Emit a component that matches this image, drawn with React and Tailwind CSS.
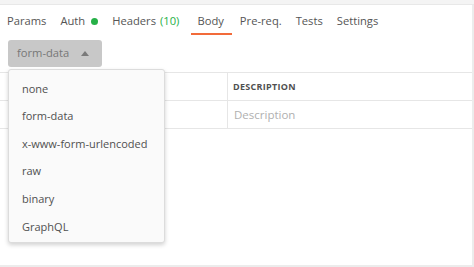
import React from "react";

const tabs = [
	{ label: "Params" },
	{ label: "Auth", dot: true },
	{ label: "Headers", count: "(10)" },
	{ label: "Body", active: true },
	{ label: "Pre-req." },
	{ label: "Tests" },
	{ label: "Settings" },
];

const options = ["none", "form-data", "x-www-form-urlencoded", "raw", "binary", "GraphQL"];

export default function App() {
	return (
		<div
			className="relative w-[474px] h-[267px] bg-white overflow-hidden text-[#505050]"
			style={{ fontFamily: '"Open Sans", sans-serif' }}
		>
			<div className="h-[5px] bg-[#f4f4f4] border-b border-[#e8e8e8]" />
			<div className="absolute right-0 top-[5px] bottom-0 w-[2px] bg-[#ececec]" />
			<div className="absolute left-0 right-0 bottom-0 h-[2px] bg-[#ececec]" />

			<div className="flex items-start h-[30px] pt-[1px] text-[11.2px] leading-[30px]">
				{tabs.map((t) => (
					<div
						key={t.label}
						className={`relative flex items-center ${t.active ? "ml-[5px] pl-[6px] pr-[8px] mr-[1px]" : "px-[7px]"}`}
					>
						<span className="text-[#555]">{t.label}</span>
						{t.dot && <span className="ml-[6px] w-[7px] h-[7px] rounded-full bg-[#26b047]" />}
						{t.count && <span className="ml-[4px] text-[#26b047]">{t.count}</span>}
						{t.active && (
							<span className="absolute left-0 right-0 top-[27px] h-[2px] bg-[#f26b3a]" />
						)}
					</div>
				))}
			</div>

			<div className="pl-[8px] pt-[5px]">
				<div className="flex items-center justify-between w-[94px] h-[27px] rounded-[3px] bg-[#c8c8c8] pl-[9px] pr-[13px] text-[11.2px] text-[#777]">
					<span>form-data</span>
					<svg width="8" height="5" viewBox="0 0 8 5">
						<path d="M0 5 L4 0 L8 5 Z" fill="#7a7a7a" />
					</svg>
				</div>
			</div>

			<div className="mt-[5px] mr-[2px] border-t border-b border-[#e6e6e6]">
				<div className="grid grid-cols-[228px_1fr] h-[28px] border-b border-[#e6e6e6] text-[9px] font-bold tracking-[0.3px] text-[#505050]">
					<div className="flex items-center justify-end pr-[62px] border-r border-[#e6e6e6]">VALUE</div>
					<div className="flex items-center pl-[5px]">DESCRIPTION</div>
				</div>
				<div className="grid grid-cols-[228px_1fr] h-[27px] text-[11.5px] text-[#b0b0b0]">
					<div className="flex items-center justify-end pr-[62px] border-r border-[#e6e6e6]">Value</div>
					<div className="flex items-center pl-[6px]">Description</div>
				</div>
			</div>

			<div className="absolute left-[8px] top-[69px] w-[157px] h-[174px] bg-[#fafafa] border border-[#dcdcdc] rounded-[3px] shadow-[0_2px_4px_rgba(0,0,0,0.18)] pt-[5px]">
				{options.map((o) => (
					<div key={o} className="h-[27.6px] flex items-center pl-[13px] text-[11px] text-[#505050]">
						{o}
					</div>
				))}
			</div>
		</div>
	);
}
